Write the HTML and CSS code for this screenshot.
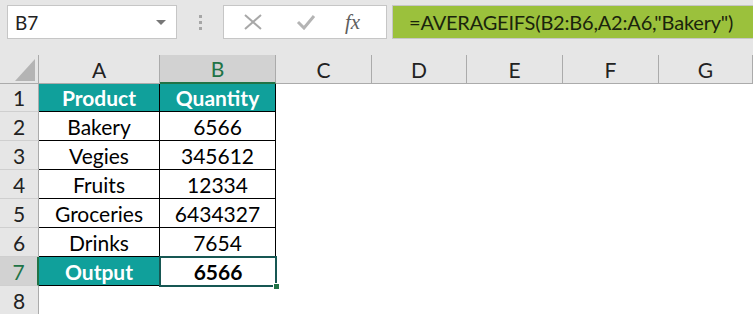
FILE: index.html
```html
<!DOCTYPE html>
<html>

<head>
	<link rel="stylesheet" href="styles.css">
</head>

<body>
	<div class="toolbar">
		<div class="namebox">
			<span>B7</span>
			<span class="arrow"></span>
		</div>
		<div class="dots"><i></i><i></i><i></i></div>
		<div class="fxbox">
			<svg class="icon" width="20" height="16" viewBox="0 0 20 16">
				<path d="M2 1 L18 15 M18 1 L2 15" stroke="#a8a8a8" stroke-width="2" fill="none" />
			</svg>
			<svg class="icon" width="20" height="16" viewBox="0 0 20 16">
				<path d="M2 8 L8 14 L18 2" stroke="#b4b4b4" stroke-width="3" fill="none" />
			</svg>
			<span class="fx">fx</span>
		</div>
		<div class="formula">=AVERAGEIFS(B2:B6,A2:A6,"Bakery")</div>
	</div>

	<div class="sheet">
		<div class="corner"><span class="tri"></span></div>
		<div class="colhead">A</div>
		<div class="colhead active">B</div>
		<div class="colhead">C</div>
		<div class="colhead">D</div>
		<div class="colhead">E</div>
		<div class="colhead">F</div>
		<div class="colhead">G</div>

		<div class="rowhead">1</div>
		<div class="cell head">Product</div>
		<div class="cell head">Quantity</div>
		<div class="empty"></div><div class="empty"></div><div class="empty"></div><div class="empty"></div><div class="empty"></div>

		<div class="rowhead">2</div>
		<div class="cell">Bakery</div>
		<div class="cell">6566</div>
		<div class="empty"></div><div class="empty"></div><div class="empty"></div><div class="empty"></div><div class="empty"></div>

		<div class="rowhead">3</div>
		<div class="cell">Vegies</div>
		<div class="cell">345612</div>
		<div class="empty"></div><div class="empty"></div><div class="empty"></div><div class="empty"></div><div class="empty"></div>

		<div class="rowhead">4</div>
		<div class="cell">Fruits</div>
		<div class="cell">12334</div>
		<div class="empty"></div><div class="empty"></div><div class="empty"></div><div class="empty"></div><div class="empty"></div>

		<div class="rowhead">5</div>
		<div class="cell">Groceries</div>
		<div class="cell">6434327</div>
		<div class="empty"></div><div class="empty"></div><div class="empty"></div><div class="empty"></div><div class="empty"></div>

		<div class="rowhead">6</div>
		<div class="cell">Drinks</div>
		<div class="cell">7654</div>
		<div class="empty"></div><div class="empty"></div><div class="empty"></div><div class="empty"></div><div class="empty"></div>

		<div class="rowhead active">7</div>
		<div class="cell head">Output</div>
		<div class="cell selected"><b>6566</b></div>
		<div class="empty"></div><div class="empty"></div><div class="empty"></div><div class="empty"></div><div class="empty"></div>

		<div class="rowhead last">8</div>
		<div class="empty"></div><div class="empty"></div><div class="empty"></div><div class="empty"></div><div class="empty"></div><div class="empty"></div><div class="empty"></div>
	</div>
</body>

</html>
```

FILE: styles.css
```css
body {
	margin: 0;
	width: 753px;
	height: 314px;
	overflow: hidden;
	background-color: #fff;
	font-family: Lato, "Open Sans", sans-serif;
	color: #000;
}

/* Formelleiste */
.toolbar {
	display: flex;
	align-items: flex-start;
	height: 55px;
	padding-top: 5px;
	padding-left: 7px;
	box-sizing: border-box;
	background-color: #e6e6e6;
}

.namebox {
	width: 170px;
	height: 34px;
	box-sizing: border-box;
	border: solid 1px #c6c6c6;
	background-color: #fff;
	display: flex;
	align-items: center;
	justify-content: space-between;
	padding: 0 10px 0 7px;
	font-size: 19px;
	color: #222;
}

.arrow {
	width: 0;
	height: 0;
	border-left: 5px solid transparent;
	border-right: 5px solid transparent;
	border-top: 5px solid #777;
}

.dots {
	width: 46px;
	height: 34px;
	display: flex;
	flex-direction: column;
	align-items: center;
	justify-content: center;
	gap: 3px;
}

.dots i {
	display: block;
	width: 3px;
	height: 3px;
	background-color: #a6a6a6;
}

.fxbox {
	width: 164px;
	height: 34px;
	box-sizing: border-box;
	border: solid 1px #c6c6c6;
	background-color: #fff;
	display: flex;
	align-items: center;
	padding-left: 19px;
	gap: 33px;
}

.fx {
	font-family: "Liberation Serif", serif;
	font-style: italic;
	font-size: 21px;
	color: #5e5e5e;
	margin-left: -4px;
}

.formula {
	flex: 1;
	height: 34px;
	margin-left: 5px;
	box-sizing: border-box;
	border: solid 1px #c6c6c6;
	border-right: none;
	background-color: #9bc13c;
	padding-left: 16px;
	font-size: 20px;
	letter-spacing: -0.2px;
	line-height: 32px;
	color: #1a240c;
	white-space: nowrap;
}

/* Tabelle */
.sheet {
	display: grid;
	grid-template-columns: 39px 121px 116px 96px 95px 96px 96px 94px;
	grid-template-rows: 29px 28px repeat(7, 29px);
}

.corner {
	background-color: #e6e6e6;
	border-right: solid 1px #ababab;
	border-bottom: solid 1px #ababab;
	box-sizing: border-box;
	position: relative;
}

.tri {
	position: absolute;
	right: 3px;
	bottom: 2px;
	width: 0;
	height: 0;
	border-left: 20px solid transparent;
	border-bottom: 22px solid #b4b4b4;
}

.colhead {
	background-color: #e6e6e6;
	border-right: solid 1px #ababab;
	border-bottom: solid 1px #ababab;
	box-sizing: border-box;
	display: flex;
	align-items: center;
	justify-content: center;
	font-size: 21px;
	color: #222;
}

.colhead.active {
	background-color: #d2d2d2;
	border-bottom: solid 2px #217346;
	color: #217346;
}

.rowhead {
	background-color: #e6e6e6;
	border-right: solid 1px #ababab;
	border-bottom: solid 1px #cfcfcf;
	box-sizing: border-box;
	display: flex;
	align-items: center;
	justify-content: center;
	font-size: 21px;
	color: #222;
}

.rowhead.active {
	background-color: #d2d2d2;
	border-right: solid 2px #217346;
	color: #217346;
}

.rowhead.last {
	border-bottom: none;
}

.cell {
	border-right: solid 1px #000;
	border-bottom: solid 1px #000;
	box-sizing: border-box;
	display: flex;
	align-items: center;
	justify-content: center;
	font-size: 21px;
}

.cell.head {
	background-color: #10a09b;
	color: #fff;
	font-weight: bold;
}

.cell.selected {
	border: solid 2px #175753;
	margin: -1px -1px -1px -1px;
	position: relative;
}

.cell.selected::after {
	content: "";
	position: absolute;
	right: -4px;
	bottom: -4px;
	width: 5px;
	height: 5px;
	background-color: #217346;
	border: solid 1px #fff;
	border-right: none;
	border-bottom: none;
}
```
